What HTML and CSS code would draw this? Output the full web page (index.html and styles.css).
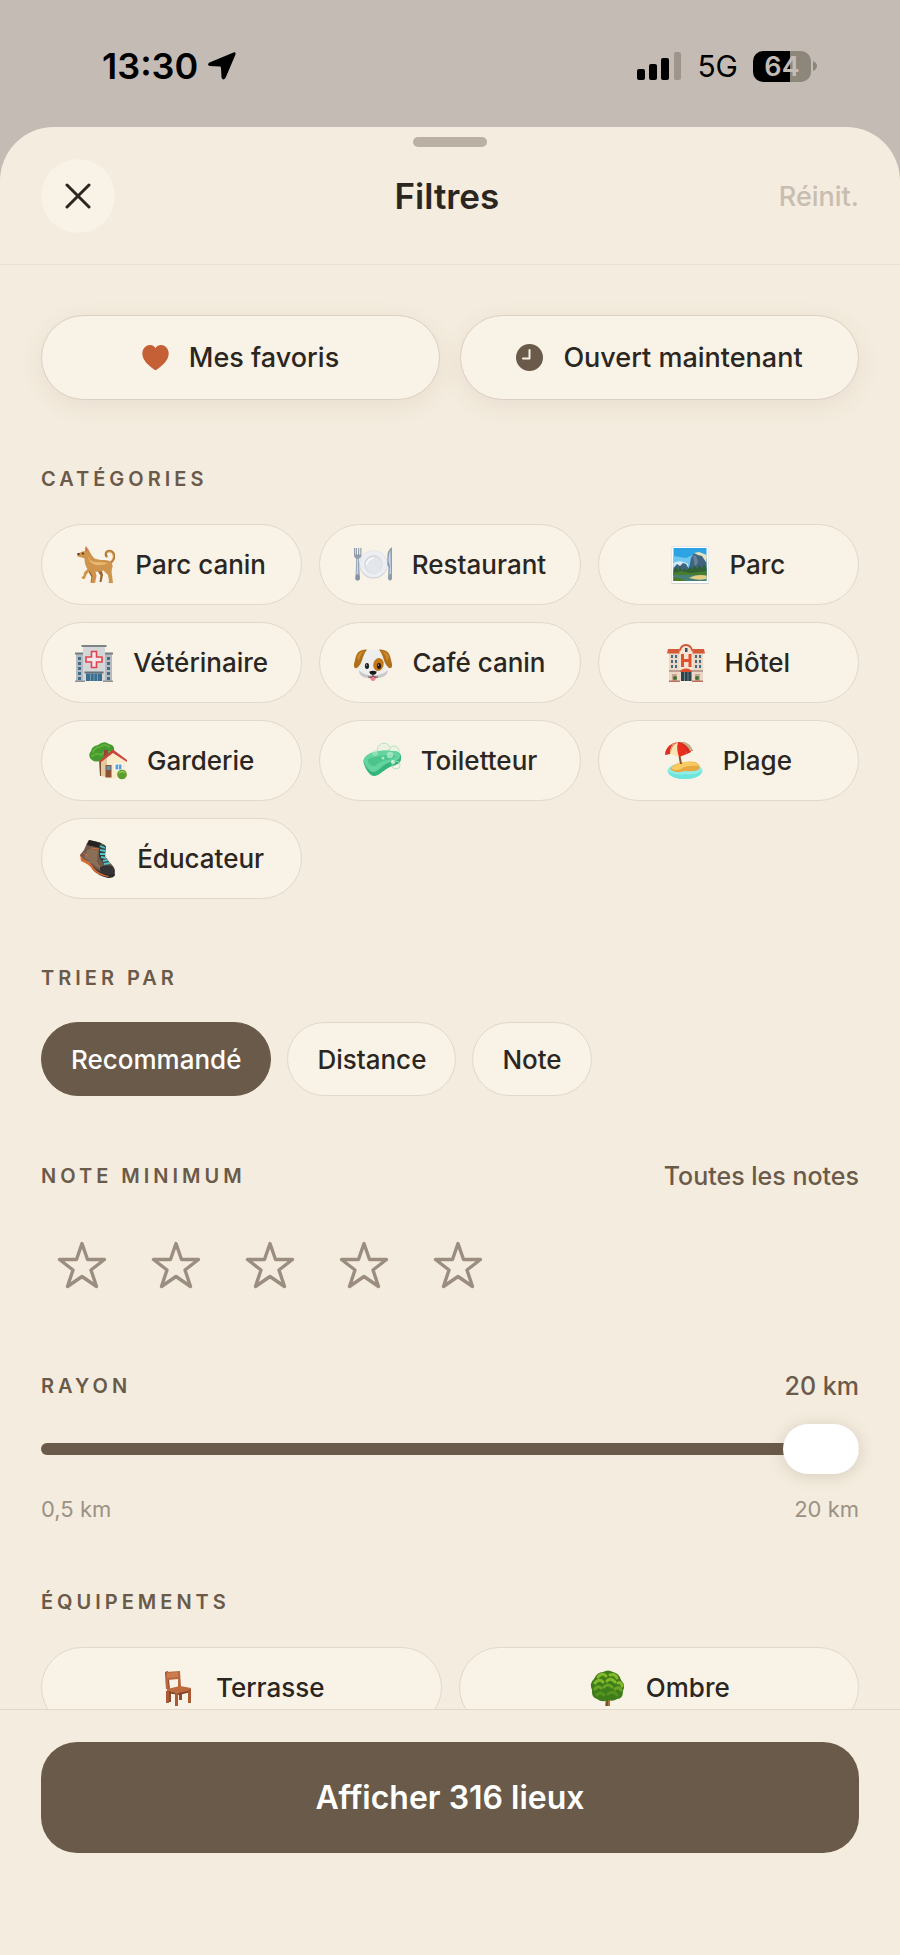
FILE: index.html
```html
<!DOCTYPE html>
<html lang="fr">
<head>
<meta charset="utf-8">
<meta name="viewport" content="width=device-width, initial-scale=1">
<title>Filtres</title>
<link rel="stylesheet" href="styles.css">
</head>
<body>
<div class="screen">
  <div class="status">
    <div class="status-group">
      <span class="status-time">13:30</span>
      <svg class="status-arrow" width="30" height="30" viewBox="0 0 30 30" aria-hidden="true"><path d="M26.500 1.500 2.500 11.500Q-.500 13.500 2.500 15L13 15.500Q14 15.500 14 17L14.500 26.500Q16 30 18.500 27L28.500 3.500Q29 .500 26.500 1.500Z"/></svg>
    </div>
    <div class="status-group status-right">
      <svg width="45" height="30" viewBox="0 0 45 30" aria-hidden="true"><rect x="0" y="18" width="8" height="11" rx="2"/><rect x="12" y="13" width="8" height="16" rx="2"/><rect x="24" y="7" width="8" height="22" rx="2"/><rect x="37" y="1" width="7" height="28" rx="2" fill="#9c968b"/></svg>
      <span class="status-net">5G</span>
      <span class="battery"><span class="battery-body">64</span><svg width="5" height="12" viewBox="0 0 5 12" aria-hidden="true"><path d="M1 1Q5 3 5 6T1 11Z" fill="#8d867b"/></svg></span>
    </div>
  </div>

  <section class="sheet" aria-labelledby="sheet-title">
    <div class="grabber"></div>
    <header class="head">
      <button class="close" type="button" aria-label="Fermer"><svg width="26" height="26" viewBox="0 0 26 26" aria-hidden="true"><path d="M2 2 24 24M24 2 2 24" fill="none" stroke="#2b261f" stroke-width="3" stroke-linecap="round"/></svg></button>
      <h1 class="title" id="sheet-title">Filtres</h1>
      <button class="reset" type="button">Réinit.</button>
    </header>

    <main class="content">
      <div class="grid grid-quick">
        <button class="chip chip-quick" type="button" aria-pressed="false"><svg width="27" height="27" viewBox="0 0 27 27" aria-hidden="true"><path d="M13.500 4.200C11.500.500 7 .300 4 2.300-.500 5.500-.500 11 2 15.500 4.200 19.500 8.500 23 12.400 25.700Q13.500 26.300 14.600 25.700C18.500 23 22.800 19.500 25 15.500 27.500 11 27.500 5.500 23 2.300 20 .300 15.500.500 13.500 4.200Z" fill="#c55f35"/></svg>Mes favoris</button>
        <button class="chip chip-quick" type="button" aria-pressed="false"><svg width="27" height="27" viewBox="0 0 27 27" aria-hidden="true"><circle cx="13.500" cy="13.500" r="13.500" fill="#6a5a4a"/><path d="M13.500 6V14.500H7" fill="none" stroke="#f9f2e6" stroke-width="2" stroke-linecap="round" stroke-linejoin="round"/></svg>Ouvert maintenant</button>
      </div>

      <section class="block">
        <h2 class="label">CATÉGORIES</h2>
        <div class="grid grid-three">
          <button class="chip" type="button" aria-pressed="false"><svg class="emoji" viewBox="0 0 38 38" aria-hidden="true">
            <path d="M33 17C36.500 15 38 11 36.500 7.500 35 4.500 31 4 29.300 6.500Q28.300 8.500 29.500 10.300" fill="none" stroke="#b47a35" stroke-width="2.400" stroke-linecap="round"/>
            <path d="M33 16.500C35.800 14 37 11 36 8.200 34.800 5.800 32 5 30 6.500" fill="none" stroke="#dda65a" stroke-width="1" stroke-linecap="round"/>
            <path d="M24 22 26 29 24.500 36H22.500L23.500 29.500 20 24M13 24 17 31 15.500 36.500H13.500L14.500 31 11 25" fill="#9b632d"/>
            <path d="M8 5Q8 1 9 0L11.500 3.500Q14 9 17.500 12.500C22 14.500 27 13.500 31 14.500Q36 16 35.500 21 34 25 35 29L36 37H31.500L32 35 31 29Q28 26 26.500 24.500 22 26.500 18.500 25.500L19.500 30 18 37H14.500V35L15.500 30 12.500 25 9.500 28.500 8 32.500Q5 34 4.500 31L6.500 30 7 26.500 10.500 23Q7.500 19 7.500 12.500L5 11.500.500 10.500Q-.500 7.500 2 7L5.500 5.500Z" fill="#cf944b"/>
            <path d="M10 8Q12 15 18 16 25 16 31 17 26 20 19 19 12 18 10 8" fill="#e8b870"/>
            <path d="M8.500 1 10.500 4 9 5.500Z" fill="#d55a58"/><path d="M0 7.500 2.500 7V9Q.500 9.500 0 7.500Z" fill="#4a2b1c"/><circle cx="6" cy="7.500" r=".9" fill="#3a2216"/>
          </svg>Parc canin</button>
          <button class="chip" type="button" aria-pressed="false"><svg class="emoji" viewBox="0 0 38 38" aria-hidden="true">
            <circle cx="19.500" cy="18.500" r="14" fill="#c9ced6"/><circle cx="19.500" cy="18" r="13.600" fill="#eceef1"/><circle cx="19.500" cy="18.500" r="9.200" fill="#cfd4da"/><circle cx="19.800" cy="19" r="8.500" fill="#e3e6ea"/><path d="M12.500 19A7.500 7.500 0 0 1 20 12" fill="none" stroke="#fafbfc" stroke-width="1.600"/>
            <path d="M0 2V8.500Q0 12 2.200 12.500L1.500 33Q3.500 36 5.800 33L5 12.500Q7.500 12 7.500 8.500V2H6.300V8.500H5.200V2H4.100V8.500H3V2H1.900V8.500H1.200V2Z" fill="#8f9cac"/><path d="M3 13 2.500 28H4.200V13Z" fill="#c3d8ee"/><path d="M1.500 29.500H5.700V33.500Q3.500 35.500 1.500 33.500Z" fill="#8892a5"/>
            <path d="M37.500 1.500Q33 4 33.300 13V19L34.500 21 34 33Q36 36 38 33V1.500Z" fill="#8f9cac"/><path d="M36.500 4Q34.500 8 34.500 15L36 20 35.500 28H37Z" fill="#c3d8ee"/>
          </svg>Restaurant</button>
          <button class="chip" type="button" aria-pressed="false"><svg class="emoji" viewBox="0 0 38 38" aria-hidden="true">
            <rect x="0" y="0" width="38" height="38" rx="1" fill="#cfd3d2"/><rect x=".5" y=".5" width="37" height="36.500" fill="#fff"/><rect x="2.500" y="2" width="33" height="33" fill="#2ea3e3"/>
            <path d="M2.500 10 15 12 24 8V35H2.500Z" fill="#6fc6ee"/><path d="M2.500 17Q9 13 17 18V25H2.500Z" fill="#d1eef6"/>
            <path d="M2.500 22 6 18 9 20 12 17 15 18 18 23 20 12 23 7.500 30 8 35.500 13V26H2.500Z" fill="#40637f"/><path d="M23 7 28 6 35.500 9V17L31 10 27 9Z" fill="#e9e3bd"/><path d="M22 10 25 9 27 16 24 22Z" fill="#65829b"/>
            <path d="M2.500 24 5 21 7 25 9 20 11 25 14 22 16 25 19 20 21 24 24 19 26 23 29 19 31 23 33 18 35.500 22V30H2.500Z" fill="#2f6132"/><path d="M2.500 27 10 25 20 27 35.500 25V30H2.500Z" fill="#477d2f"/>
            <path d="M2.500 29H35.500V35H2.500Z" fill="#467f76"/><path d="M18 32Q25 28 35.500 29.500V33Q28 35 18 32Z" fill="#e5cd83"/><path d="M2.500 31Q9 32 15 35H2.500Z" fill="#4e7c24"/>
          </svg>Parc</button>
          <button class="chip" type="button" aria-pressed="false"><svg class="emoji" viewBox="0 0 38 38" aria-hidden="true">
            <path d="M1 10H37V37H1Z" fill="#b6babf"/><path d="M0 8.500H8V10.500H0ZM30 8.500H38V10.500H30Z" fill="#777d84"/><path d="M8 2H30V37H8Z" fill="#d5d6d8"/><path d="M6.500 1H31.500V3H6.500Z" fill="#7d8289"/>
            <path d="M3 13H6V16H3ZM3 18H6V21H3ZM3 23H6V26H3ZM3 28H6V31H3ZM3 33H6V36H3ZM32 13H35V16H32ZM32 18H35V21H32ZM32 23H35V26H32ZM32 28H35V31H32ZM32 33H35V36H32Z" fill="#3f6e88"/>
            <path d="M16.500 7.500H21.500V13H27V18H21.500V23.500H16.500V18H11V13H16.500Z" fill="#f7e7e8" stroke="#e1434e" stroke-width="1.600"/>
            <path d="M9.500 27.500H28.500V29.500H9.500Z" fill="#6b7178"/><path d="M11 29.500H27V37H11Z" fill="#3a6d8e"/><path d="M15.500 29.500V37M19 29.500V37M22.500 29.500V37" stroke="#8db3c6" stroke-width=".7"/><path d="M0 36.500H10V38H0ZM28 36.500H38V38H28Z" fill="#8d9297"/>
          </svg>Vétérinaire</button>
          <button class="chip" type="button" aria-pressed="false"><svg class="emoji" viewBox="0 0 38 38" aria-hidden="true">
            <path d="M19 5.500C27 5 32 10 33 18 35.500 25 34 31.500 27 33.500 21 35 17 35 11 33.500 4 31.500 2.500 25 5 18 6 10 11 5.500 19 5.500Z" fill="#eeeeed"/><path d="M5 26Q10 32 19 31 28 32 34 26 33.500 32 27 33.500 19 35.500 11 33.500 5 32 5 26" fill="#c9c8ca"/>
            <path d="M13 5.500Q4 5 2 12L0 20Q-.500 25 3 24 7 21 9 13Q11 8 13 5.500ZM25 5.500Q34 5 36 12L38 20Q38.500 25 35 24 31 21 29 13 27 8 25 5.500Z" fill="#b06f19"/><path d="M3 13Q5 8 10 7 6 11 5 17ZM35 13Q33 8 28 7 32 11 33 17Z" fill="#cd8b30"/>
            <ellipse cx="24.500" cy="20.500" rx="5.200" ry="6.500" fill="#c17818" transform="rotate(15 24.500 20.500)"/><ellipse cx="13" cy="22" rx="2.100" ry="2.900" fill="#20242a"/><ellipse cx="25" cy="22" rx="2.100" ry="2.900" fill="#29180d"/><circle cx="12.500" cy="21" r=".6" fill="#fff"/><circle cx="24.500" cy="21" r=".6" fill="#fff"/>
            <path d="M16 32Q16 37 19 37 22 37 22 32Z" fill="#f27f90"/><path d="M15.500 27.500Q19 26 22.500 27.500 23 30 19 31 15 30 15.500 27.500Z" fill="#19191c"/><path d="M19 30V32M14 33Q18 34 19 32 20 34 24 33" fill="none" stroke="#4b4342" stroke-width=".9"/>
          </svg>Café canin</button>
          <button class="chip" type="button" aria-pressed="false"><svg class="emoji" viewBox="0 0 38 38" aria-hidden="true">
            <path d="M2 8H36V37H2Z" fill="#e9d8c5"/><path d="M12 8Q12 1 19 1T26 8V29H12Z" fill="#f4e3d0"/><path d="M12 7Q13 0 19 0T26 7L24.500 7Q23 2 19 2T13.500 7Z" fill="#ce5636"/><path d="M1 5H12.500V9.500H0ZM25.500 5H37L38 9.500H25.500Z" fill="#d45b35"/>
            <path d="M14 10H17V15H21.500V10H24.500V23H21.500V18H17V23H14Z" fill="#e2512e"/><path d="M18 4H20.500V8H18Z" fill="#3d5361"/>
            <path d="M4 11H6V14H4ZM8 11H10V14H8ZM4 16H6V19H4ZM8 16H10V19H8ZM4 21H6V24H4ZM8 21H10V24H8ZM28 11H30V14H28ZM32 11H34V14H32ZM28 16H30V19H28ZM32 16H34V19H32ZM28 21H30V24H28ZM32 21H34V24H32Z" fill="#476980"/>
            <path d="M2 26H36V28H2Z" fill="#bd9e94"/><path d="M13 28Q14 24.500 19 24.500T25 28Z" fill="#dc4e2d"/><path d="M14 28H24.500V37H14Z" fill="#2e4551"/><path d="M17.500 28V37M21 28V37" stroke="#8e9999" stroke-width=".7"/>
            <path d="M5 30H10V37H5ZM28 30H33V37H28Z" fill="#c7a596"/><circle cx="8" cy="34" r="2" fill="#3b722e"/><circle cx="30" cy="34" r="2" fill="#3b722e"/><path d="M2 36.500H13V38H2ZM25 36.500H36V38H25Z" fill="#b9725f"/>
          </svg>Hôtel</button>
          <button class="chip" type="button" aria-pressed="false"><svg class="emoji" viewBox="0 0 38 38" aria-hidden="true">
            <path d="M10 17H14V34H11Z" fill="#795030"/><path d="M3 18Q-2 14 2 9 3 4 9 3 15-2 20 2 26 3 25 9 27 15 22 17 18 20 13 18 7 21 3 18Z" fill="#439a2e"/><path d="M4 10Q6 5 11 5 16 1 20 5M3 14Q8 10 12 13 16 8 21 10" fill="none" stroke="#62b03b" stroke-width="2" stroke-linecap="round"/>
            <path d="M12 18 24 9 36 19V34L25 37 12 34Z" fill="#faeccb"/><path d="M12 20 18 13V35L12 34Z" fill="#e3ca9e"/><path d="M15 8H19V14H15Z" fill="#99433a"/><path d="M10 19 24 7.500 38 18V20L24 11 11 21Z" fill="#c7453d"/>
            <path d="M16.500 23H22.500V35.500H16.500Z" fill="#8e5134"/><path d="M17.500 24H21.500V28H17.500Z" fill="#5f95b4"/><path d="M25.500 21.500H33.500V28.500H25.500Z" fill="#fff"/><path d="M26.500 22.500H32.500V27.500H26.500Z" fill="#5b9ed6"/><path d="M29.500 22.500V27.500" stroke="#fff" stroke-width=".7"/><circle cx="33" cy="32.500" r="4.800" fill="#5c9d2c"/><path d="M30 31Q33 28 36 31" fill="none" stroke="#91c958" stroke-width="1.400"/>
          </svg>Garderie</button>
          <button class="chip" type="button" aria-pressed="false"><svg class="emoji" viewBox="0 0 38 38" aria-hidden="true">
            <circle cx="21" cy="8" r="6.800" fill="#ecf2df" stroke="#a9debb" stroke-width=".8"/><circle cx="31" cy="9" r="5" fill="#ecf2df" stroke="#a9debb" stroke-width=".8"/>
            <path d="M4 14C10 9 20 8 29 9 36 9 39 12 38 17 38 22 32 23 27 25 22 27 16 34 11 34 7 34 3 28 1 22Q-1 17 4 14Z" fill="#35b57d"/><path d="M4 13C11 8.500 21 8 29 9 36 9 38 12 37 15 36 19 30 19 25 21 19 23 16 29 11 30 7 30 3 25 1 20Q0 16 4 13Z" fill="#63d49e"/><path d="M5 17Q16 13 27 13 32 12 32 15 30 17 24 18 17 19 12 24 8 25 5 20Z" fill="#4bc58c"/>
            <circle cx="12" cy="11" r="3" fill="#bce9cc" opacity=".5"/><circle cx="27" cy="13" r="3.300" fill="#b9ecd0" opacity=".7"/><circle cx="20" cy="16" r="1.500" fill="#c3efd5" opacity=".8"/><circle cx="30" cy="20" r="2" fill="#d9f4e2"/><circle cx="33" cy="23" r="4" fill="none" stroke="#a5e0bd" stroke-width=".8"/>
          </svg>Toiletteur</button>
          <button class="chip" type="button" aria-pressed="false"><svg class="emoji" viewBox="0 0 38 38" aria-hidden="true">
            <ellipse cx="20" cy="29" rx="17.500" ry="8" fill="#8eeee6"/><path d="M3 29Q11 34 20 32 31 34 37 28 35 37 20 37 5 37 3 29" fill="#6be5dd"/><path d="M5 27Q8 21 20 20 34 18 35 26 33 30 20 29 10 32 5 27Z" fill="#e6a941"/><path d="M6 26Q11 20 20 20 31 19 34 24 21 23 16 27 10 30 6 26Z" fill="#f8cb62"/>
            <path d="M12 7 14 6 17 22H15Z" fill="#8a552b"/><path d="M0 13Q2 1 13 0 24-1 28 9L22 9 14 14 7 10Z" fill="#e33322"/><path d="M13 0Q5 2 6 12L0 13Q1 3 13 0Z" fill="#f3ddae"/><path d="M13 0Q5 4 6 12L14 15Q15 5 13 0Z" fill="#f7e4b2"/><path d="M13 0Q11 7 14 15L22 12Q20 3 13 0Z" fill="#e92e20"/><path d="M13 0Q20 3 22 12L26 10Q25 3 13 0Z" fill="#dc2722"/><path d="M14 0Q27 0 27 9L25 9Q22 2 14 0Z" fill="#bfb086"/><path d="M0 13Q0 5 8 2 5 6 5 12Z" fill="#dc3024"/>
          </svg>Plage</button>
          <button class="chip" type="button" aria-pressed="false"><svg class="emoji" viewBox="0 0 38 38" aria-hidden="true">
            <path d="M1 15 5 21Q12 24 14 30 18 35 29 38 35 38 36 35L35 30 14 25Z" fill="#29292a"/><path d="M1 14 5 19Q12 22 15 28 20 34 30 36L29 37Q16 34 13 29 10 24 2 21Z" fill="#d56b32"/>
            <path d="M10 0Q17 1 22 3L26 5V16Q30 22 34 26 37 30 35 33 27 36 20 31 14 28 11 22 5 20 1 15L5 10 8 3Z" fill="#70584a"/><path d="M10 0 22 3 21 8 8 5Z" fill="#222"/><path d="M11 9 19 10 18 22 24 30Q16 27 11 21L5 18 8 10Z" fill="#8b6e58"/><path d="M21 27Q28 24 33 26 37 30 35 34 27 36 21 31Z" fill="#363334"/>
            <path d="M20 4 27 6 26 17 31 24 26 25 20 17Z" fill="#333b39"/><path d="M21 6 26 8M21 10 26 11M21 14 26 14M22 17 27 18M24 21 29 20M25 24 31 23" stroke="#52c6c8" stroke-width="1.800"/><path d="M12 8 20 9M4 13 9 16" stroke="#db6d35" stroke-width="1"/>
          </svg>Éducateur</button>
        </div>
      </section>

      <section class="block">
        <h2 class="label">TRIER PAR</h2>
        <div class="sort">
          <button class="pill pill-on" type="button" aria-pressed="true">Recommandé</button>
          <button class="pill" type="button" aria-pressed="false">Distance</button>
          <button class="pill" type="button" aria-pressed="false">Note</button>
        </div>
      </section>

      <section class="block">
        <div class="label-row"><h2 class="label">NOTE MINIMUM</h2><span class="value">Toutes les notes</span></div>
        <svg class="defs" aria-hidden="true"><symbol id="star" viewBox="0 0 50 48"><path d="M25 2.500 30.500 18.500H47.500L34 29 39.500 45.500 25 35.500 10.500 45.500 16 29 2.500 18.500H19.500Z" fill="none" stroke="#9b8e81" stroke-width="3.400" stroke-linejoin="round"/></symbol></svg>
        <div class="stars">
          <button class="star" type="button" aria-label="1 étoile"><svg width="50" height="48"><use href="#star"/></svg></button>
          <button class="star" type="button" aria-label="2 étoiles"><svg width="50" height="48"><use href="#star"/></svg></button>
          <button class="star" type="button" aria-label="3 étoiles"><svg width="50" height="48"><use href="#star"/></svg></button>
          <button class="star" type="button" aria-label="4 étoiles"><svg width="50" height="48"><use href="#star"/></svg></button>
          <button class="star" type="button" aria-label="5 étoiles"><svg width="50" height="48"><use href="#star"/></svg></button>
        </div>
      </section>

      <section class="block">
        <div class="label-row"><h2 class="label"><label for="radius">RAYON</label></h2><output class="value" for="radius">20 km</output></div>
        <input class="slider" id="radius" type="range" min="0.5" max="20" step="0.5" value="20">
        <div class="bounds"><span>0,5 km</span><span>20 km</span></div>
      </section>

      <section class="block">
        <h2 class="label">ÉQUIPEMENTS</h2>
        <div class="grid grid-two">
          <button class="chip" type="button" aria-pressed="false"><svg class="emoji" viewBox="0 0 38 38" aria-hidden="true">
            <path d="M10 20H13V33H10ZM21 20H24V31H21ZM30 20H33V34H30Z" fill="#8d4b2d"/><path d="M7 3 10 2 12 20H8Z" fill="#8c4a2c"/><path d="M8 3 22 2 23 18 20 19 20 10 10 11 11 20 8 20Z" fill="#b8673e"/><path d="M9 4 20 3V8L9 9Z" fill="#cb7c50"/><path d="M9 20 22 17 33 19 32 22 21 24 9 22Z" fill="#bd6b3d"/><path d="M9 22 21 24 33 21V23L21 26 9 24Z" fill="#844326"/><path d="M8 22H11V34H8ZM17 24H20V37H17ZM30 22H33V34H30Z" fill="#aa5a34"/>
          </svg>Terrasse</button>
          <button class="chip" type="button" aria-pressed="false"><svg class="emoji" viewBox="0 0 38 38" aria-hidden="true">
            <path d="M18 28H22V37H17.500Z" fill="#a07535"/><path d="M18 28H20V37H17.500Z" fill="#78542a"/><path d="M9 30Q3 28 4 21 1 14 6 10 9 3 15 3 20 0 25 3 31 4 33 11 38 16 35 22 35 30 29 30 25 33 20 31 14 34 9 30Z" fill="#3f7d1a"/>
            <path d="M10 8Q14 3 18 7M22 6Q27 4 29 9M7 14Q11 9 15 13M19 12Q23 8 27 13M30 14Q33 12 34 17" fill="none" stroke="#83b929" stroke-width="3" stroke-linecap="round"/>
            <path d="M7 20Q10 16 13 19M16 18Q20 14 24 18M27 20Q31 17 33 21" fill="none" stroke="#6ba527" stroke-width="3" stroke-linecap="round"/>
            <path d="M9 26Q12 22 16 26M20 25Q25 21 29 26" fill="none" stroke="#579320" stroke-width="3" stroke-linecap="round"/>
          </svg>Ombre</button>
        </div>
      </section>
    </main>

    <footer class="foot">
      <button class="submit" type="button">Afficher 316 lieux</button>
    </footer>
  </section>
</div>
</body>
</html>
```
FILE: styles.css
```css
:root {
  --paper: #f4ecde;
  --card: #f9f2e6;
  --line: #e1d8ca;
  --brown: #6a5a4a;
  --ink: #2b261f;
  --muted: #9b9184;
}

* { box-sizing: border-box; }

body {
  margin: 0;
  background: #c4bcb4;
  color: var(--ink);
  font-family: Inter, "Liberation Sans", sans-serif;
}

button {
  margin: 0;
  padding: 0;
  border: 0;
  background: none;
  color: inherit;
  font: inherit;
  cursor: pointer;
}

svg { flex: none; display: block; }

.screen {
  display: flex;
  flex-direction: column;
  height: 100vh;
}

/* Status bar */
.status {
  display: flex;
  justify-content: space-between;
  align-items: center;
  padding: 44px 83px 39px 102px;
  color: #000;
}

.status-group {
  display: flex;
  align-items: center;
  gap: 9px;
  height: 44px;
}

.status-right { gap: 15px; }
.status-time { font-size: 36px; font-weight: 600; }
.status-net { font-size: 30px; }

.battery {
  display: flex;
  align-items: center;
  gap: 1px;
}

.battery-body {
  width: 58px;
  height: 31px;
  border-radius: 10px;
  background: linear-gradient(90deg, #000 64%, #8d867b 64%);
  color: #c4bcb4;
  font-size: 27px;
  font-weight: 600;
  line-height: 31px;
  text-align: center;
}

/* Sheet */
.sheet {
  flex: 1;
  min-height: 0;
  display: flex;
  flex-direction: column;
  background: var(--paper);
  border-radius: 54px 54px 0 0;
  overflow: hidden;
}

.grabber {
  flex: none;
  width: 74px;
  height: 10px;
  margin: 10px auto 0;
  border-radius: 5px;
  background: #bab1a4;
}

.head {
  flex: none;
  display: flex;
  justify-content: space-between;
  align-items: center;
  padding: 12px 41px 31px;
  border-bottom: 1px solid #e9e0d2;
}

.close {
  display: grid;
  place-items: center;
  width: 74px;
  height: 74px;
  border-radius: 50%;
  background: var(--card);
}

.title {
  margin: 0;
  font-size: 35px;
  font-weight: 600;
  line-height: 44px;
}

.reset {
  color: #c8bdb0;
  font-size: 27px;
  font-weight: 500;
}

.content {
  flex: 1;
  min-height: 0;
  padding: 50px 41px 0;
  overflow-y: auto;
  scrollbar-width: none;
}

.block { margin-top: 64px; }

.label {
  margin: 0;
  color: var(--brown);
  font-size: 20px;
  font-weight: 600;
  line-height: 30px;
  letter-spacing: 4px;
}

.label-row {
  display: flex;
  justify-content: space-between;
  align-items: center;
}

.value {
  color: var(--brown);
  font-size: 25px;
  font-weight: 500;
  line-height: 32px;
}

/* Chips */
.grid { display: grid; gap: 17px; }
.grid-quick { grid-template-columns: 1fr 1fr; gap: 20px; }
.grid-two { grid-template-columns: 1fr 1fr; margin-top: 30px; }
.grid-three { grid-template-columns: 1fr 1fr 1fr; margin-top: 30px; }

.chip {
  display: flex;
  align-items: center;
  justify-content: center;
  gap: 20px;
  height: 81px;
  border: 1px solid var(--line);
  border-radius: 41px;
  background: var(--card);
  font-size: 26px;
  font-weight: 500;
  white-space: nowrap;
}

.chip-quick {
  height: 85px;
  border-color: #dbd0c2;
  border-radius: 43px;
  box-shadow: 0 6px 24px rgba(106, 80, 60, 0.08);
  font-size: 27px;
}

.emoji { width: 38px; height: 38px; }

/* Sort */
.sort {
  display: flex;
  gap: 16px;
  margin-top: 29px;
}

.pill {
  height: 74px;
  padding: 0 29px;
  border: 1px solid var(--line);
  border-radius: 37px;
  background: var(--card);
  font-size: 26px;
  font-weight: 500;
}

.pill-on {
  border-color: var(--brown);
  background: var(--brown);
  color: #fff;
}

/* Rating */
.defs { position: absolute; width: 0; height: 0; }

.stars {
  display: flex;
  gap: 12px;
  margin-top: 32px;
}

.star {
  display: grid;
  place-items: center;
  width: 82px;
  height: 82px;
}

/* Radius */
.slider {
  appearance: none;
  display: block;
  width: 100%;
  height: 50px;
  margin: 22px 0 0;
  background: none;
}

.slider::-webkit-slider-runnable-track {
  height: 12px;
  border-radius: 6px;
  background: var(--brown);
}

.slider::-webkit-slider-thumb {
  appearance: none;
  width: 76px;
  height: 50px;
  margin-top: -19px;
  border-radius: 25px;
  background: #fff;
  box-shadow: 0 2px 16px rgba(90, 80, 60, 0.2);
}

.bounds {
  display: flex;
  justify-content: space-between;
  margin-top: 21px;
  color: var(--muted);
  font-size: 22px;
  line-height: 28px;
}

/* Footer */
.foot {
  flex: none;
  padding: 32px 41px 102px;
  border-top: 1px solid var(--line);
}

.submit {
  width: 100%;
  height: 111px;
  border-radius: 36px;
  background: var(--brown);
  color: #fff;
  font-size: 32px;
  font-weight: 600;
}
```
